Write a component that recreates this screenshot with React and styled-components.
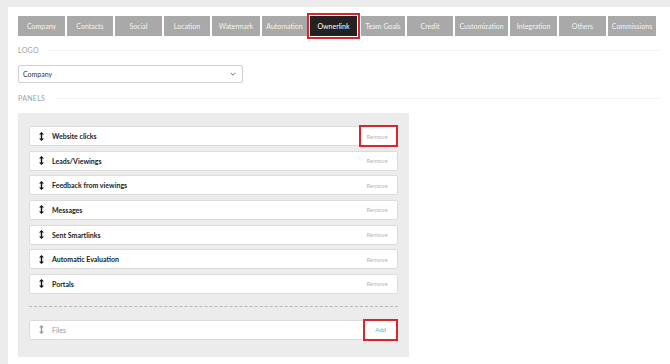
import React from "react";
import styled, { createGlobalStyle } from "styled-components";

const Global = createGlobalStyle`
  html, body { margin: 0; padding: 0; }
  body {
    background: #ececec;
    font-family: Lato, "Open Sans", "Liberation Sans", sans-serif;
  }
`;

const Main = styled.div`
  margin: 7px 0 0 8px;
  background: #fff;
  min-height: 357px;
  padding: 9px 10px 0 10px;
  box-sizing: border-box;
`;

const Tabs = styled.div`
  display: flex;
  gap: 2px;
`;

const Tab = styled.div`
  flex: none;
  width: ${(p) => p.$w}px;
  height: 20px;
  display: flex;
  align-items: center;
  justify-content: center;
  font-size: 7px;
  color: ${(p) => (p.$active ? "#fff" : "#f4f4f4")};
  background: ${(p) => (p.$active ? "#222" : "#a9a9a9")};
  outline: ${(p) => (p.$active ? "2px solid #d7262e" : "none")};
  outline-offset: 1px;
  margin: ${(p) => (p.$active ? "0 2px 0 1px" : "0")};
`;

const SectionLabel = styled.div`
  display: flex;
  align-items: center;
  gap: 10px;
  font-size: 7px;
  color: #a0a0a0;
  letter-spacing: 0.3px;
  height: 12px;
  margin-top: ${(p) => p.$mt}px;
  &::after {
    content: "";
    flex: 1;
    height: 1px;
    background: #f3f3f3;
  }
`;

const Select = styled.div`
  margin-top: 9px;
  width: 225px;
  height: 18px;
  box-sizing: border-box;
  border: 1px solid #cfcfcf;
  border-radius: 2px;
  display: flex;
  align-items: center;
  justify-content: space-between;
  padding: 0 6px 0 4px;
  font-size: 7px;
  color: #333;
`;

const PanelBox = styled.div`
  margin-top: 9px;
  width: 391px;
  background: #ececec;
  padding: 13px 11px 17px 11px;
  box-sizing: border-box;
`;

const List = styled.div`
  display: flex;
  flex-direction: column;
  gap: 4.67px;
`;

const Row = styled.div`
  height: 20px;
  box-sizing: border-box;
  background: #fff;
  border: 1px solid #dcdcdc;
  border-radius: 2px;
  display: flex;
  align-items: center;
  padding-left: 8px;
`;

const Handle = styled.span`
  width: 6px;
  display: flex;
  justify-content: center;
  color: ${(p) => (p.$muted ? "#9a9a9a" : "#111")};
`;

const Label = styled.span`
  margin-left: 8px;
  flex: 1;
  font-size: 7px;
  font-weight: ${(p) => (p.$muted ? 400 : 700)};
  color: ${(p) => (p.$muted ? "#9a9a9a" : "#222")};
`;

const Action = styled.span`
  flex: none;
  margin-right: -1px;
  width: ${(p) => p.$w}px;
  height: 22px;
  box-sizing: border-box;
  display: flex;
  align-items: center;
  justify-content: center;
  padding-right: ${(p) => (p.$add ? 0 : 3)}px;
  font-size: 6px;
  color: ${(p) => (p.$add ? "#4fb7d6" : "#b8b8b8")};
  border: ${(p) => (p.$hl ? "2px solid #d7262e" : "2px solid transparent")};
`;

const Divider = styled.div`
  margin: 12px 0 13px;
  border-top: 1px dashed #b9b9b9;
`;

const UpDown = () => (
  <svg width="5" height="9" viewBox="0 0 5 9">
    <path d="M2.5 0 L5 2.6 L3.2 2.6 L3.2 6.4 L5 6.4 L2.5 9 L0 6.4 L1.8 6.4 L1.8 2.6 L0 2.6 Z" fill="currentColor" />
  </svg>
);

const Chevron = () => (
  <svg width="6" height="4" viewBox="0 0 6 4">
    <path d="M0.5 0.7 L3 3.2 L5.5 0.7" fill="none" stroke="#666" strokeWidth="0.9" />
  </svg>
);

const tabs = [
  ["Company", 47],
  ["Contacts", 46],
  ["Social", 47],
  ["Location", 46],
  ["Watermark", 48],
  ["Automation", 45],
  ["Ownerlink", 47, true],
  ["Team Goals", 44],
  ["Credit", 46],
  ["Customization", 53],
  ["Integration", 47],
  ["Others", 47],
  ["Commissions", 48],
];

const panels = [
  "Website clicks",
  "Leads/Viewings",
  "Feedback from viewings",
  "Messages",
  "Sent Smartlinks",
  "Automatic Evaluation",
  "Portals",
];

export default function App() {
  return (
    <>
      <Global />
      <Main>
        <Tabs>
          {tabs.map(([t, w, a]) => (
            <Tab key={t} $w={w} $active={a}>
              {t}
            </Tab>
          ))}
        </Tabs>
        <SectionLabel $mt={8}>LOGO</SectionLabel>
        <Select>
          <span>Company</span>
          <Chevron />
        </Select>
        <SectionLabel $mt={9}>PANELS</SectionLabel>
        <PanelBox>
          <List>
            {panels.map((p, i) => (
              <Row key={p}>
                <Handle>
                  <UpDown />
                </Handle>
                <Label>{p}</Label>
                <Action $w={39} $hl={i === 0}>
                  Remove
                </Action>
              </Row>
            ))}
          </List>
          <Divider />
          <Row>
            <Handle $muted>
              <UpDown />
            </Handle>
            <Label $muted>Files</Label>
            <Action $w={35} $add $hl>
              Add
            </Action>
          </Row>
        </PanelBox>
      </Main>
    </>
  );
}
